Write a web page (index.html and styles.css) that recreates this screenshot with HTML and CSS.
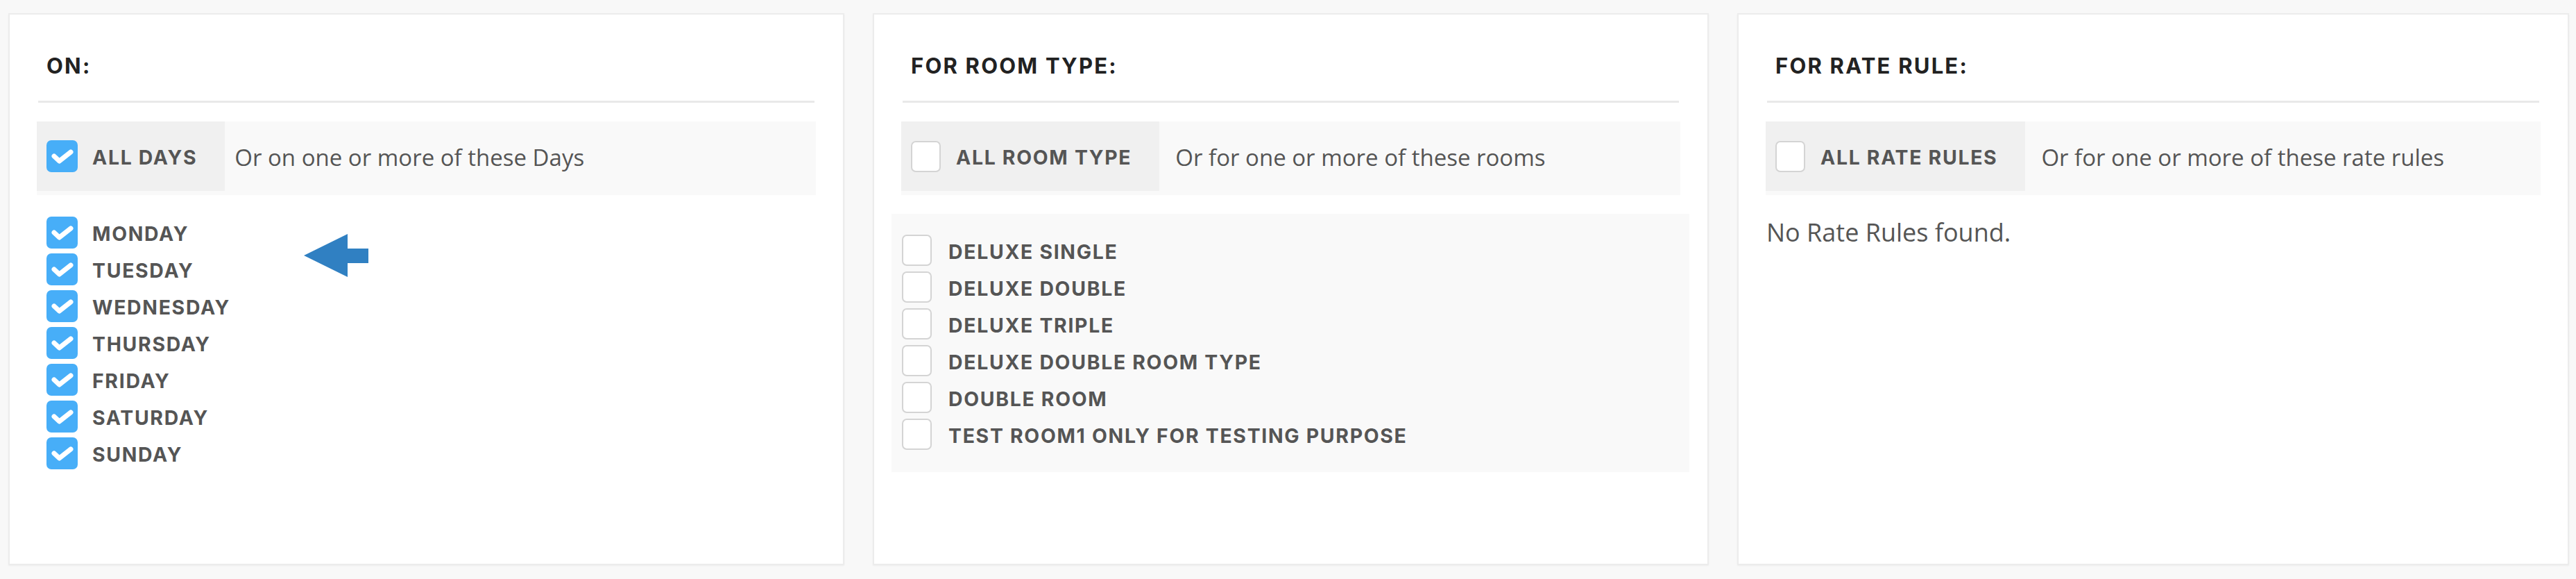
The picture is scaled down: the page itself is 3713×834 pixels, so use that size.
FILE: index.html
```html
<!DOCTYPE html>
<html lang="en">
<head>
<meta charset="utf-8">
<title>Rate restrictions</title>
<link rel="stylesheet" href="styles.css">
</head>
<body>
<div class="panels">
  <section class="panel panel--days">
    <h3 class="panel-title">ON:</h3>
    <div class="all-row">
      <label class="all-box">
        <span class="cb cb--on"><svg viewBox="0 0 45 46" width="45" height="46"><rect x="0" y="0" width="45" height="46" rx="7" fill="#47aef8"/><polyline points="11,23 18.5,30 35,17" fill="none" stroke="#fff" stroke-width="7" stroke-linecap="round" stroke-linejoin="round"/></svg></span>
        <span class="opt-label">ALL DAYS</span>
      </label>
      <span class="all-hint all-hint--tight">Or on one or more of these Days</span>
    </div>
    <ul class="opt-list">
      <li class="opt"><span class="cb cb--on"><svg viewBox="0 0 45 46" width="45" height="46"><rect width="45" height="46" rx="7" fill="#47aef8"/><polyline points="11,23 18.5,30 35,17" fill="none" stroke="#fff" stroke-width="7" stroke-linecap="round" stroke-linejoin="round"/></svg></span><span class="opt-label">MONDAY</span></li>
      <li class="opt"><span class="cb cb--on"><svg viewBox="0 0 45 46" width="45" height="46"><rect width="45" height="46" rx="7" fill="#47aef8"/><polyline points="11,23 18.5,30 35,17" fill="none" stroke="#fff" stroke-width="7" stroke-linecap="round" stroke-linejoin="round"/></svg></span><span class="opt-label">TUESDAY</span></li>
      <li class="opt"><span class="cb cb--on"><svg viewBox="0 0 45 46" width="45" height="46"><rect width="45" height="46" rx="7" fill="#47aef8"/><polyline points="11,23 18.5,30 35,17" fill="none" stroke="#fff" stroke-width="7" stroke-linecap="round" stroke-linejoin="round"/></svg></span><span class="opt-label">WEDNESDAY</span></li>
      <li class="opt"><span class="cb cb--on"><svg viewBox="0 0 45 46" width="45" height="46"><rect width="45" height="46" rx="7" fill="#47aef8"/><polyline points="11,23 18.5,30 35,17" fill="none" stroke="#fff" stroke-width="7" stroke-linecap="round" stroke-linejoin="round"/></svg></span><span class="opt-label">THURSDAY</span></li>
      <li class="opt"><span class="cb cb--on"><svg viewBox="0 0 45 46" width="45" height="46"><rect width="45" height="46" rx="7" fill="#47aef8"/><polyline points="11,23 18.5,30 35,17" fill="none" stroke="#fff" stroke-width="7" stroke-linecap="round" stroke-linejoin="round"/></svg></span><span class="opt-label">FRIDAY</span></li>
      <li class="opt"><span class="cb cb--on"><svg viewBox="0 0 45 46" width="45" height="46"><rect width="45" height="46" rx="7" fill="#47aef8"/><polyline points="11,23 18.5,30 35,17" fill="none" stroke="#fff" stroke-width="7" stroke-linecap="round" stroke-linejoin="round"/></svg></span><span class="opt-label">SATURDAY</span></li>
      <li class="opt"><span class="cb cb--on"><svg viewBox="0 0 45 46" width="45" height="46"><rect width="45" height="46" rx="7" fill="#47aef8"/><polyline points="11,23 18.5,30 35,17" fill="none" stroke="#fff" stroke-width="7" stroke-linecap="round" stroke-linejoin="round"/></svg></span><span class="opt-label">SUNDAY</span></li>
    </ul>
    <svg class="pointer-arrow" viewBox="0 0 93 62" width="93" height="62"><polygon points="0,31 63,0 63,21 93,21 93,42 63,42 63,62" fill="#3080c2"/></svg>
  </section>

  <section class="panel">
    <h3 class="panel-title">FOR ROOM TYPE:</h3>
    <div class="all-row">
      <label class="all-box">
        <span class="cb cb--off"></span>
        <span class="opt-label">ALL ROOM TYPE</span>
      </label>
      <span class="all-hint">Or for one or more of these rooms</span>
    </div>
    <ul class="opt-list opt-list--boxed">
      <li class="opt"><span class="cb cb--off"></span><span class="opt-label">DELUXE SINGLE</span></li>
      <li class="opt"><span class="cb cb--off"></span><span class="opt-label">DELUXE DOUBLE</span></li>
      <li class="opt"><span class="cb cb--off"></span><span class="opt-label">DELUXE TRIPLE</span></li>
      <li class="opt"><span class="cb cb--off"></span><span class="opt-label">DELUXE DOUBLE ROOM TYPE</span></li>
      <li class="opt"><span class="cb cb--off"></span><span class="opt-label">DOUBLE ROOM</span></li>
      <li class="opt"><span class="cb cb--off"></span><span class="opt-label">TEST ROOM1 ONLY FOR TESTING PURPOSE</span></li>
    </ul>
  </section>

  <section class="panel">
    <h3 class="panel-title">FOR RATE RULE:</h3>
    <div class="all-row">
      <label class="all-box">
        <span class="cb cb--off"></span>
        <span class="opt-label">ALL RATE RULES</span>
      </label>
      <span class="all-hint">Or for one or more of these rate rules</span>
    </div>
    <p class="empty-note">No Rate Rules found.</p>
  </section>
</div>
</body>
</html>
```

FILE: styles.css
```css
* { box-sizing: border-box; }

html, body {
  margin: 0;
  background: #f8f8f8;
}

body {
  padding: 19px 10px 20px 12px;
  font-family: "Open Sans", "Liberation Sans", sans-serif;
  color: #555;
}

.panels {
  display: grid;
  grid-template-columns: 1205px 1205px 1fr;
  column-gap: 41px;
  height: 795px;
}

.panel {
  position: relative;
  background: #fff;
  border: 2px solid #ececec;
  box-shadow: 0 1px 2px rgba(0, 0, 0, 0.05);
  padding: 0 41px;
}

.panel-title {
  margin: 0;
  padding: 55px 0 32px 12px;
  border-bottom: 3px solid #e9e9e9;
  font-family: Inter, "DejaVu Sans", sans-serif;
  font-weight: 700;
  font-size: 31px;
  line-height: 37px;
  letter-spacing: 2.2px;
  color: #222;
}

.all-row {
  display: flex;
  align-items: flex-start;
  margin: 27px -2px 0;
  padding-bottom: 6px;
  background: #f9f9f9;
}

.all-box {
  display: flex;
  align-items: center;
  height: 100px;
  padding: 0 40px 0 14px;
  background: #f0f0f0;
}

.all-hint {
  align-self: center;
  margin-top: 4px;
  margin-left: 23px;
  font-size: 33px;
  line-height: 44px;
  color: #555;
}

.all-hint--tight { margin-left: 14px; }

.cb {
  flex: none;
  display: block;
  width: 44px;
  height: 46px;
}

.cb svg { display: block; }

.cb--off {
  width: 43px;
  height: 45px;
  background: #fff;
  border: 2px solid #d4d4d4;
  border-radius: 7px;
}

.opt-label {
  margin-left: 22px;
  padding-top: 4px;
  font-family: Inter, "DejaVu Sans", sans-serif;
  font-weight: 700;
  font-size: 28.4px;
  line-height: 36px;
  letter-spacing: 1.7px;
  color: #555;
  white-space: nowrap;
}

.opt-list {
  list-style: none;
  margin: 27px 0 0;
  padding: 0 0 0 12px;
}

.opt {
  display: flex;
  align-items: center;
  height: 53px;
}

.opt-list--boxed {
  margin: 27px -15px 0 -16px;
  padding: 26px 15px 28px 15px;
  background: #f9f9f9;
}

.opt-list--boxed .opt-label { margin-left: 24px; }

.empty-note {
  margin: 30px 0 0 -1px;
  font-size: 36px;
  line-height: 48px;
  color: #555;
}

.pointer-arrow {
  position: absolute;
  left: 424px;
  top: 316px;
}
```
